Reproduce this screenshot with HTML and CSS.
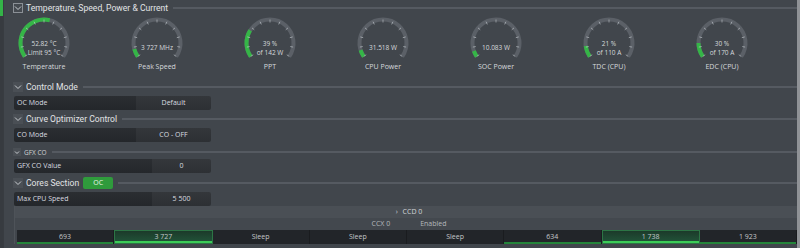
FILE: index.html
```html
<!DOCTYPE html>
<html lang="en">
<head>
    <meta charset="UTF-8">
    <title>Tuning Panel</title>
    <link rel="stylesheet" href="styles.css">
</head>
<body>
    <!-- shared gauge parts -->
    <svg class="defs" width="0" height="0">
        <defs>
            <path id="gauge-track" d="M10.75 40.49 A23.5 23.5 0 1 1 49.25 40.49" />
            <g id="gauge-ticks">
                <line x1="30" y1="3.5" x2="30" y2="6.5" transform="rotate(-125 30 27)" />
                <line x1="30" y1="3.5" x2="30" y2="6.5" transform="rotate(-100 30 27)" />
                <line x1="30" y1="3.5" x2="30" y2="6.5" transform="rotate(-75 30 27)" />
                <line x1="30" y1="3.5" x2="30" y2="6.5" transform="rotate(-50 30 27)" />
                <line x1="30" y1="3.5" x2="30" y2="6.5" transform="rotate(-25 30 27)" />
                <line x1="30" y1="3.5" x2="30" y2="6.5" />
                <line x1="30" y1="3.5" x2="30" y2="6.5" transform="rotate(25 30 27)" />
                <line x1="30" y1="3.5" x2="30" y2="6.5" transform="rotate(50 30 27)" />
                <line x1="30" y1="3.5" x2="30" y2="6.5" transform="rotate(75 30 27)" />
                <line x1="30" y1="3.5" x2="30" y2="6.5" transform="rotate(100 30 27)" />
                <line x1="30" y1="3.5" x2="30" y2="6.5" transform="rotate(125 30 27)" />
            </g>
        </defs>
    </svg>

    <div class="app">
        <div class="rail"><div class="rail-active"></div></div>

        <div class="content">
            <div class="section-head section-head-first">
                <span class="toggle toggle-boxed">
                    <svg width="8" height="6" viewBox="0 0 8 6"><path d="M1 1.5 L4 4.5 L7 1.5" /></svg>
                </span>
                <span class="section-title">Temperature, Speed, Power &amp; Current</span>
                <span class="section-line"></span>
            </div>

            <div class="gauges">
                <div class="gauge">
                    <svg width="60" height="46" viewBox="0 0 60 46">
                        <use href="#gauge-track" class="track" />
                        <path class="value" d="M10.75 40.49 A23.5 23.5 0 0 1 35.69 4.20" />
                        <use href="#gauge-ticks" class="ticks" />
                        <text x="30" y="29.5">52.82 °C</text>
                        <text x="30" y="38.5">Limit 95 °C</text>
                    </svg>
                    <div class="gauge-label">Temperature</div>
                </div>
                <div class="gauge">
                    <svg width="60" height="46" viewBox="0 0 60 46">
                        <use href="#gauge-track" class="track" />
                        <path class="value" d="M10.75 40.49 A23.5 23.5 0 0 1 7.30 33.08" />
                        <use href="#gauge-ticks" class="ticks" />
                        <text x="30" y="34">3 727  MHz</text>
                    </svg>
                    <div class="gauge-label">Peak Speed</div>
                </div>
                <div class="gauge">
                    <svg width="60" height="46" viewBox="0 0 60 46">
                        <use href="#gauge-track" class="track" />
                        <path class="value" d="M10.75 40.49 A23.5 23.5 0 0 1 10.18 14.37" />
                        <use href="#gauge-ticks" class="ticks" />
                        <text x="30" y="29.5">39 %</text>
                        <text x="30" y="38.5">of 142 W</text>
                    </svg>
                    <div class="gauge-label">PPT</div>
                </div>
                <div class="gauge">
                    <svg width="60" height="46" viewBox="0 0 60 46">
                        <use href="#gauge-track" class="track" />
                        <path class="value" d="M10.75 40.49 A23.5 23.5 0 0 1 7.59 34.07" />
                        <use href="#gauge-ticks" class="ticks" />
                        <text x="30" y="34">31.518 W</text>
                    </svg>
                    <div class="gauge-label">CPU Power</div>
                </div>
                <div class="gauge">
                    <svg width="60" height="46" viewBox="0 0 60 46">
                        <use href="#gauge-track" class="track" />
                        <path class="value" d="M10.75 40.49 A23.5 23.5 0 0 1 7.92 35.04" />
                        <use href="#gauge-ticks" class="ticks" />
                        <text x="30" y="34">10.083 W</text>
                    </svg>
                    <div class="gauge-label">SOC Power</div>
                </div>
                <div class="gauge">
                    <svg width="60" height="46" viewBox="0 0 60 46">
                        <use href="#gauge-track" class="track" />
                        <path class="value" d="M10.75 40.49 A23.5 23.5 0 0 1 6.70 30.07" />
                        <use href="#gauge-ticks" class="ticks" />
                        <text x="30" y="29.5">21 %</text>
                        <text x="30" y="38.5">of 110 A</text>
                    </svg>
                    <div class="gauge-label">TDC (CPU)</div>
                </div>
                <div class="gauge">
                    <svg width="60" height="46" viewBox="0 0 60 46">
                        <use href="#gauge-track" class="track" />
                        <path class="value" d="M10.75 40.49 A23.5 23.5 0 0 1 6.5 27" />
                        <use href="#gauge-ticks" class="ticks" />
                        <text x="30" y="29.5">30 %</text>
                        <text x="30" y="38.5">of 170 A</text>
                    </svg>
                    <div class="gauge-label">EDC (CPU)</div>
                </div>
            </div>

            <div class="section-head">
                <span class="toggle">
                    <svg width="8" height="6" viewBox="0 0 8 6"><path d="M1 1.5 L4 4.5 L7 1.5" /></svg>
                </span>
                <span class="section-title">Control Mode</span>
                <span class="section-line"></span>
            </div>
            <div class="field">
                <div class="field-label">OC Mode</div>
                <div class="field-value">Default</div>
            </div>

            <div class="section-head">
                <span class="toggle">
                    <svg width="8" height="6" viewBox="0 0 8 6"><path d="M1 1.5 L4 4.5 L7 1.5" /></svg>
                </span>
                <span class="section-title">Curve Optimizer Control</span>
                <span class="section-line"></span>
            </div>
            <div class="field">
                <div class="field-label">CO Mode</div>
                <div class="field-value">CO - OFF</div>
            </div>

            <div class="sub-head">
                <span class="toggle toggle-small">
                    <svg width="6" height="5" viewBox="0 0 6 5"><path d="M1 1.5 L3 3.5 L5 1.5" /></svg>
                </span>
                <span class="sub-title">GFX CO</span>
                <span class="section-line"></span>
            </div>
            <div class="field">
                <div class="field-label field-label-wide">GFX CO Value</div>
                <div class="field-value">0</div>
            </div>

            <div class="section-head section-head-loose">
                <span class="toggle">
                    <svg width="8" height="6" viewBox="0 0 8 6"><path d="M1 1.5 L4 4.5 L7 1.5" /></svg>
                </span>
                <span class="section-title">Cores Section</span>
                <span class="badge">OC</span>
                <span class="section-line"></span>
            </div>
            <div class="field">
                <div class="field-label field-label-wide">Max CPU Speed</div>
                <div class="field-value">5 500</div>
            </div>

            <div class="cores">
                <div class="ccd-bar"><span class="ccd-arrow">›</span> CCD 0</div>
                <div class="ccx-bar">
                    <span>CCX 0</span>
                    <span>Enabled</span>
                </div>
                <div class="core-row">
                    <div class="core core-on">693</div>
                    <div class="core core-hot">3 727</div>
                    <div class="core">Sleep</div>
                    <div class="core">Sleep</div>
                    <div class="core">Sleep</div>
                    <div class="core core-on">634</div>
                    <div class="core core-hot">1 738</div>
                    <div class="core core-on">1 923</div>
                </div>
            </div>
        </div>

        <div class="scrollbar"></div>
    </div>
</body>
</html>
```

FILE: styles.css
```css
body {
    margin: 0;
    width: 800px;
    height: 248px;
    overflow: hidden;
    background-color: #41464c;
    font-family: "Open Sans", "Noto Sans", sans-serif;
    color: #dcdfe2;
}

.defs {
    position: absolute;
    width: 0;
    height: 0;
}

.app {
    display: flex;
    height: 248px;
}

.rail {
    width: 3px;
    background-color: #373b40;
    border-right: 1px solid #383c41;
}

.rail-active {
    height: 16px;
    background-color: #34b348;
}

.content {
    flex: 1;
    padding: 2px 0 0 9px;
    min-width: 0;
}

.scrollbar {
    width: 3px;
    background-color: #8f9296;
}

/* Section headers */
.section-head {
    display: flex;
    align-items: center;
    height: 12px;
    gap: 3px;
    margin-top: 3px;
}

.section-head-first {
    margin-top: 0;
}

.section-head-loose {
    margin-top: 4px;
}

.toggle {
    width: 10px;
    height: 10px;
    display: flex;
    align-items: center;
    justify-content: center;
    background-color: #4a4f55;
    box-sizing: border-box;
}

.toggle svg path {
    fill: none;
    stroke: #c9cdd1;
    stroke-width: 1;
}

.toggle-boxed {
    border: 1px solid #8b9096;
    background-color: #454a50;
}

.toggle-small {
    width: 8px;
    height: 8px;
}

.section-title {
    font-family: Roboto, "Open Sans", sans-serif;
    font-size: 8.6px;
    white-space: nowrap;
    color: #e2e4e6;
}

.section-line {
    flex: 1;
    height: 2px;
    background-color: #555a61;
    margin-left: 2px;
}

.sub-head {
    display: flex;
    align-items: center;
    height: 8px;
    gap: 3px;
    margin-top: 6px;
}

.sub-title {
    font-size: 6.5px;
    color: #cfd2d5;
}

.badge {
    background-color: #2f9b3c;
    color: #e8f5ea;
    font-size: 7px;
    width: 30px;
    height: 12px;
    line-height: 12px;
    text-align: center;
    border-radius: 2px;
    margin-left: 1px;
}

/* Gauges */
.gauges {
    display: flex;
    gap: 53px;
    margin: 2px 0 9px 1px;
}

.gauge {
    width: 60px;
    display: flex;
    flex-direction: column;
    align-items: center;
}

.gauge svg {
    display: block;
}

.gauge .track {
    fill: none;
    stroke: #5b6067;
    stroke-width: 4;
}

.gauge .value {
    fill: none;
    stroke: #35b547;
    stroke-width: 4;
}

.gauge .ticks {
    stroke: rgba(220, 225, 230, 0.6);
    stroke-width: 0.8;
}

.gauge text {
    font-family: "Open Sans", "Noto Sans", sans-serif;
    font-size: 6.5px;
    fill: #d6d9dc;
    text-anchor: middle;
}

.gauge-label {
    font-size: 7px;
    line-height: 10px;
    color: #d6d9dc;
    white-space: nowrap;
}

/* Fields */
.field {
    display: flex;
    width: 197px;
    height: 14px;
    margin: 3px 0 0 1px;
    font-size: 7px;
    line-height: 14px;
    border-radius: 2px;
    overflow: hidden;
}

.field-label {
    width: 119px;
    padding-left: 3px;
    background: linear-gradient(#2b2e32, #24272b);
    color: #dadde0;
}

.field-label-wide {
    width: 135px;
}

.field-value {
    flex: 1;
    text-align: center;
    background: linear-gradient(#34373b, #2d3034);
    color: #dadde0;
}

/* Cores */
.cores {
    margin: 0 0 0 1px;
    border-left: 1px solid #4e5359;
}

.ccd-bar {
    height: 12px;
    line-height: 12px;
    background-color: #4a4f55;
    text-align: center;
    font-size: 7px;
    color: #d3d6d9;
    padding-left: 6px;
}

.ccd-arrow {
    margin-right: 3px;
}

.ccx-bar {
    height: 12px;
    line-height: 12px;
    display: flex;
    justify-content: center;
    gap: 30px;
    font-size: 7px;
    color: #b4b8bc;
    background-color: #43484e;
    padding-left: 6px;
}

.core-row {
    display: flex;
    height: 14px;
    padding-left: 2px;
}

.core {
    flex: 1;
    font-size: 7px;
    line-height: 14px;
    text-align: center;
    color: #c4c7ca;
    background-color: #222529;
    border-right: 1px solid #1a1c1f;
    box-sizing: border-box;
}

.core-on {
    box-shadow: inset 0 -2px 0 #24853a;
}

.core-hot {
    background: linear-gradient(#1c3a2a, #22553a);
    border: 1px solid #2c7545;
    box-shadow: inset 0 -2px 0 #3ccc58;
    line-height: 12px;
}
```
